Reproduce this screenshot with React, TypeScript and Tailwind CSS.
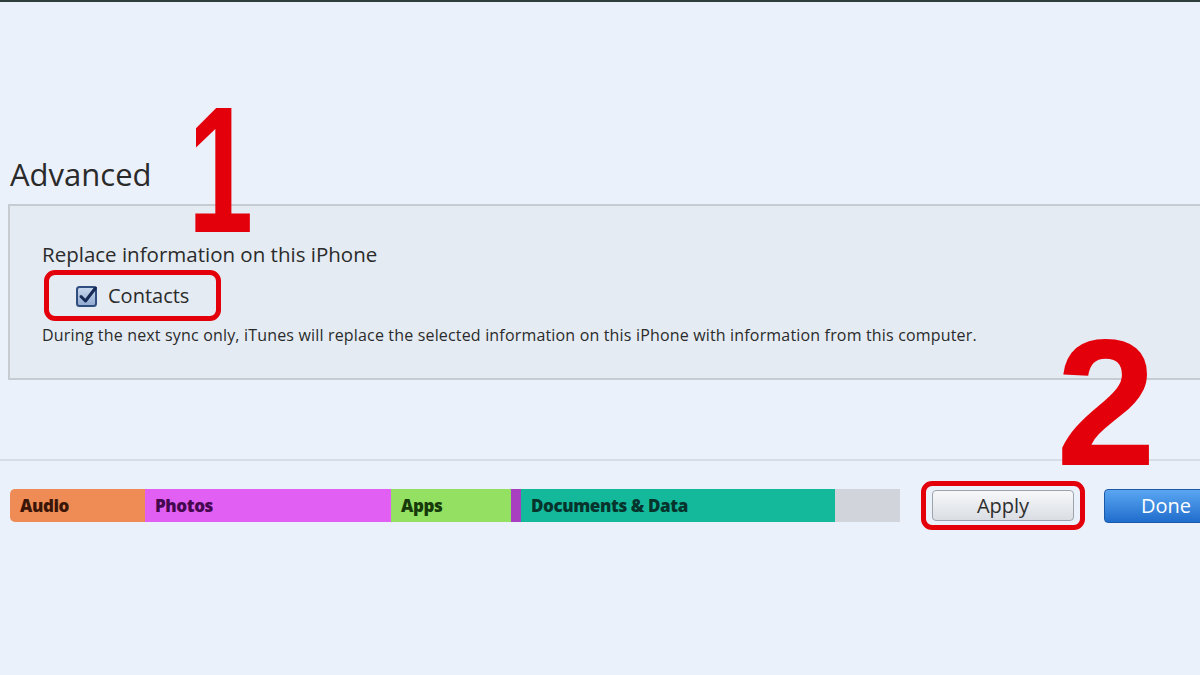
import React from "react";

const segments = [
  { label: "Audio", w: 135, bg: "bg-[#ef8c55]", fg: "text-[#3b1608]" },
  { label: "Photos", w: 246, bg: "bg-[#e15ff2]", fg: "text-[#45084f]" },
  { label: "Apps", w: 120, bg: "bg-[#93e062]", fg: "text-[#173a0a]" },
  { label: "", w: 8, bg: "bg-[#a73fc0]", fg: "" },
  { label: "Documents & Data", w: 314, bg: "bg-[#14b99c]", fg: "text-[#06342c]" },
  { label: "", w: 65, bg: "bg-[#d1d5db]", fg: "" },
];

function CheckBox() {
  return (
    <svg width="22" height="22" viewBox="0 0 22 22">
      <defs>
        <linearGradient id="cb" x1="0" y1="0" x2="0" y2="1">
          <stop offset="0" stopColor="#c8d8ee" />
          <stop offset="1" stopColor="#8fa9cf" />
        </linearGradient>
      </defs>
      <rect x="1" y="2" width="19" height="19" rx="2.5" fill="url(#cb)" stroke="#2f4d7e" strokeWidth="2" />
      <path d="M5 11.5 L9.5 16 L19.5 3" fill="none" stroke="#172a55" strokeWidth="3" strokeLinecap="round" strokeLinejoin="round" />
    </svg>
  );
}

export default function App() {
  return (
    <div className="relative h-[675px] w-[1200px] overflow-hidden border-t-2 border-[#2f3f3c] bg-[#ebf1fb] font-['Open_Sans',sans-serif] text-[#262626]">
      <div className="pt-[154px]">
        <h1 className="h-[36px] pl-[10px] text-[31px] leading-[36px] text-[#2a2a2a]">Advanced</h1>

        <section className="ml-[8px] mt-[12px] h-[176px] w-[1200px] border-2 border-[#c7ccd3] bg-[#e5ebf3] pl-[32px] pt-[35px]">
          <p className="text-[20.5px] leading-[26px] text-[#2b2b2b]">Replace information on this iPhone</p>
          <div className="ml-[2px] mt-[3px] flex h-[51px] w-[177px] items-center rounded-[11px] border-[5px] border-[#e3000b] pl-[27px]">
            <CheckBox />
            <span className="ml-[10px] text-[20px] leading-[26px] text-[#2b2b2b]">Contacts</span>
          </div>
          <p className="mt-[4px] whitespace-nowrap text-[16px] leading-[20px] tracking-[0.17px] text-[#2b2b2b]">
            During the next sync only, iTunes will replace the selected information on this iPhone with information from this computer.
          </p>
        </section>

        <div className="mt-[79px] h-[2px] w-full bg-[#d7dde6]" />

        <div className="mt-[20px] flex h-[49px] items-center pl-[10px]">
          <div className="flex h-[33px] shrink-0 overflow-hidden rounded-l-[5px]">
            {segments.map((s, i) => (
              <div key={i} style={{ width: s.w }} className={`flex shrink-0 items-center pl-[10px] ${s.bg}`}>
                {s.label && (
                  <span className={`whitespace-nowrap text-[17px] font-extrabold tracking-[-0.4px] ${s.fg}`}>{s.label}</span>
                )}
              </div>
            ))}
          </div>

          <div className="ml-[21px] flex h-[49px] w-[164px] shrink-0 items-center rounded-[11px] border-[5px] border-[#e3000b] pl-[6px]">
            <button className="flex h-[31px] w-[142px] items-center justify-center rounded-[4px] border border-[#9da3ab] bg-gradient-to-b from-[#f7f8fa] to-[#dadee4] text-[20px] text-[#2e2e2e]">
              Apply
            </button>
          </div>

          <button className="ml-[19px] flex h-[34px] w-[124px] shrink-0 items-center justify-center rounded-[4px] border border-[#1b5aa8] bg-gradient-to-b from-[#5aa6f2] to-[#1f6dcc] text-[20px] text-white">
            Done
          </button>
        </div>
      </div>

      <span className="absolute left-[188px] top-[78px] origin-left scale-x-[0.65] font-['Liberation_Sans',Arial,sans-serif] text-[180px] font-bold leading-none text-[#e3000b]">
        1
      </span>
      <span className="absolute left-[1056px] top-[311px] font-['Liberation_Sans',Arial,sans-serif] text-[180px] font-bold leading-none text-[#e3000b]">
        2
      </span>
    </div>
  );
}
